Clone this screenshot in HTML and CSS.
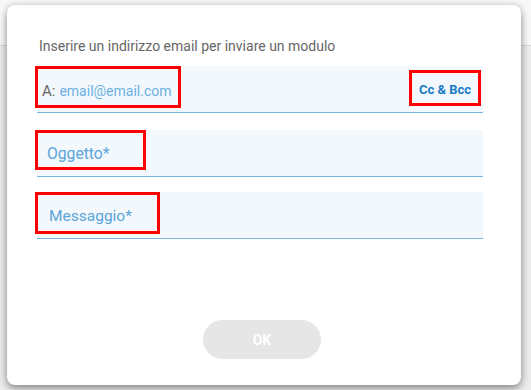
FILE: index.html
```html
<!DOCTYPE html>
<html lang="it">
<head>
    <meta charset="UTF-8">
    <meta name="viewport" content="width=device-width, initial-scale=1.0">
    <title>Invia modulo</title>
    <link rel="stylesheet" href="styles.css">
</head>
<body>
    <div class="modal">
        <p class="intro">Inserire un indirizzo email per inviare un modulo</p>

        <div class="field">
            <div class="mark mark-to">
                <span class="to-label">A:</span>
                <span class="to-value">email@email.com</span>
            </div>
            <div class="mark mark-cc">Cc &amp; Bcc</div>
        </div>

        <div class="field field-subject">
            <div class="mark mark-subject">Oggetto*</div>
        </div>

        <div class="field">
            <div class="mark mark-message">Messaggio*</div>
        </div>

        <div class="actions">
            <button class="ok-btn" disabled>OK</button>
        </div>
    </div>
</body>
</html>
```

FILE: styles.css
```css
* {
    margin: 0;
    padding: 0;
    box-sizing: border-box;
}
body {
    height: 390px;
    overflow: hidden;
    padding: 5px 10px 5px 7px;
    font-family: Roboto, "Liberation Sans", sans-serif;
    background:
        linear-gradient(180deg, #f8f8f8 0, #f8f8f8 45px, #d8d8d8 45px, #d8d8d8 46px, #ececec 46px);
}
.modal {
    width: 514px;
    height: 380px;
    background: white;
    border-radius: 8px;
    box-shadow: 0 4px 8px rgba(0, 0, 0, 0.35), 0 0 6px rgba(0, 0, 0, 0.15);
    padding: 33px 38px 0 30px;
}
.intro {
    font-size: 14px;
    line-height: 16px;
    color: #666;
    margin-bottom: 12px;
    padding-left: 2px;
}
.field {
    height: 47px;
    background: #f3f8fc;
    border-bottom: 1px solid #7ab5de;
    display: flex;
    justify-content: space-between;
    align-items: flex-start;
    padding-right: 2px;
    margin-bottom: 17px;
}
.field-subject {
    margin-bottom: 15px;
}
.mark {
    border: 3px solid #ff0000;
    display: flex;
    align-items: center;
    margin-left: -2px;
}
.mark-to {
    width: 146px;
    height: 42px;
    padding: 7px 0 0 4px;
    gap: 4px;
}
.to-label {
    font-size: 15px;
    color: #666;
}
.to-value {
    font-size: 14px;
    color: #6cb0e2;
}
.mark-cc {
    width: 72px;
    height: 36px;
    margin-top: 4px;
    justify-content: center;
    padding-top: 2px;
    font-size: 13px;
    font-weight: bold;
    color: #1a7bc6;
}
.mark-subject {
    width: 111px;
    height: 40px;
    padding: 7px 0 0 9px;
    font-size: 15.7px;
    color: #5aa5da;
}
.mark-message {
    width: 125px;
    height: 42px;
    padding: 6px 0 0 11px;
    font-size: 15.5px;
    color: #5aa5da;
}
.actions {
    display: flex;
    justify-content: center;
    margin-top: 81px;
    padding-left: 4px;
}
.ok-btn {
    width: 118px;
    height: 39px;
    border: none;
    border-radius: 20px;
    background: #e6e6e6;
    color: white;
    font-family: Roboto, "Liberation Sans", sans-serif;
    font-size: 14px;
    font-weight: bold;
}
```
